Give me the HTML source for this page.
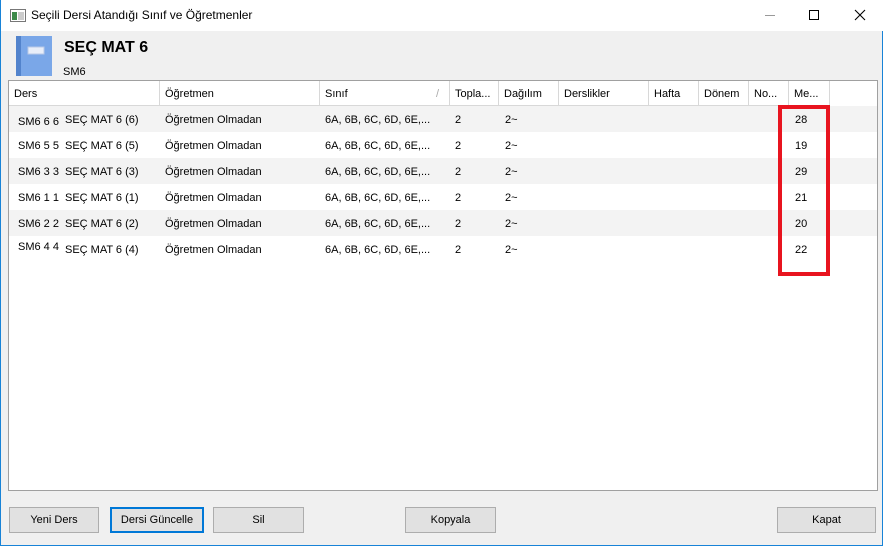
<!DOCTYPE html>
<html><head><meta charset="utf-8"><style>
*{margin:0;padding:0;box-sizing:border-box}
body{width:883px;height:546px;overflow:hidden;background:#f0f0f0;font-family:"Segoe UI","Liberation Sans",sans-serif;font-size:12px;color:#000;position:relative}
.win{position:absolute;left:0;top:0;width:883px;height:546px;border:1px solid #1883d7;border-top:none;background:#f0f0f0}
.title{position:absolute;left:0;top:0;width:883px;height:31px;background:#fff}
.title span{position:absolute;left:30px;top:8px;font-size:12px}
.abs{position:absolute}
.tbl{position:absolute;left:7px;top:80px;width:870px;height:411px;border:1px solid #a0a0a0;background:#fff}
.hd{position:absolute;top:0;height:25px;border-right:1px solid #d8d8d8;border-bottom:1px solid #d8d8d8;background:#fff;padding:7px 0 0 5px;white-space:nowrap;font-size:11px}
.row{position:absolute;left:0;width:868px;height:26px}
.row div{position:absolute;top:8px;font-size:11px;white-space:nowrap}
.btn{position:absolute;top:507px;height:26px;border:1px solid #adadad;background:#e1e1e1;text-align:center;line-height:24px;font-size:11px}
</style></head><body>
<div class="win">
<div class="title">
<svg class="abs" style="left:9px;top:9px" width="16" height="13"><rect x="0.5" y="0.5" width="15" height="12" fill="#fff" stroke="#777"/><rect x="2" y="3" width="5" height="8" fill="#3d8a4a"/><rect x="8" y="3" width="6" height="8" fill="#ccc"/></svg>
<span>Seçili Dersi Atandığı Sınıf ve Öğretmenler</span>
<div class="abs" style="left:764px;top:15px;width:10px;height:1px;background:#999"></div>
<div class="abs" style="left:808px;top:10px;width:10px;height:10px;border:1px solid #000"></div>
<svg class="abs" style="left:853px;top:9px" width="12" height="12"><path d="M1 1L11 11M11 1L1 11" stroke="#000" stroke-width="1.1"/></svg>
</div>
<svg class="abs" style="left:15px;top:36px" width="36" height="40"><rect x="0" y="0" width="36" height="40" fill="#7aa7e8"/><rect x="0" y="0" width="5" height="40" fill="#5283cc"/><rect x="12" y="11" width="16" height="7" fill="#e8eef9" stroke="#b8c8e6"/></svg>
<div class="abs" style="left:63px;top:39px;font-size:16px;font-weight:bold;font-family:'Liberation Sans',sans-serif">SEÇ MAT 6</div>
<div class="abs" style="left:62px;top:66px;font-size:11px">SM6</div>
<div class="tbl">
<div class="hd" style="left:0;width:151px">Ders</div>
<div class="hd" style="left:151px;width:160px">Öğretmen</div>
<div class="hd" style="left:311px;width:130px">Sınıf<span style="position:absolute;right:10px;color:#aaa">/</span></div>
<div class="hd" style="left:441px;width:49px">Topla...</div>
<div class="hd" style="left:490px;width:60px">Dağılım</div>
<div class="hd" style="left:550px;width:90px">Derslikler</div>
<div class="hd" style="left:640px;width:50px">Hafta</div>
<div class="hd" style="left:690px;width:50px">Dönem</div>
<div class="hd" style="left:740px;width:40px">No...</div>
<div class="hd" style="left:780px;width:41px">Me...</div>
<div class="row" style="top:25px;background:#f3f3f3"><div style="left:9px;top:10px">SM6 6 6</div><div style="left:56px">SEÇ MAT 6 (6)</div><div style="left:156px">Öğretmen Olmadan</div><div style="left:316px">6A, 6B, 6C, 6D, 6E,...</div><div style="left:446px">2</div><div style="left:496px">2~</div><div style="left:786px">28</div></div>
<div class="row" style="top:51px"><div style="left:9px">SM6 5 5</div><div style="left:56px">SEÇ MAT 6 (5)</div><div style="left:156px">Öğretmen Olmadan</div><div style="left:316px">6A, 6B, 6C, 6D, 6E,...</div><div style="left:446px">2</div><div style="left:496px">2~</div><div style="left:786px">19</div></div>
<div class="row" style="top:77px;background:#f3f3f3"><div style="left:9px">SM6 3 3</div><div style="left:56px">SEÇ MAT 6 (3)</div><div style="left:156px">Öğretmen Olmadan</div><div style="left:316px">6A, 6B, 6C, 6D, 6E,...</div><div style="left:446px">2</div><div style="left:496px">2~</div><div style="left:786px">29</div></div>
<div class="row" style="top:103px"><div style="left:9px">SM6 1 1</div><div style="left:56px">SEÇ MAT 6 (1)</div><div style="left:156px">Öğretmen Olmadan</div><div style="left:316px">6A, 6B, 6C, 6D, 6E,...</div><div style="left:446px">2</div><div style="left:496px">2~</div><div style="left:786px">21</div></div>
<div class="row" style="top:129px;background:#f3f3f3"><div style="left:9px">SM6 2 2</div><div style="left:56px">SEÇ MAT 6 (2)</div><div style="left:156px">Öğretmen Olmadan</div><div style="left:316px">6A, 6B, 6C, 6D, 6E,...</div><div style="left:446px">2</div><div style="left:496px">2~</div><div style="left:786px">20</div></div>
<div class="row" style="top:155px"><div style="left:9px;top:5px">SM6 4 4</div><div style="left:56px">SEÇ MAT 6 (4)</div><div style="left:156px">Öğretmen Olmadan</div><div style="left:316px">6A, 6B, 6C, 6D, 6E,...</div><div style="left:446px">2</div><div style="left:496px">2~</div><div style="left:786px">22</div></div>
</div>
<div class="abs" style="left:777px;top:105px;width:52px;height:171px;border:4px solid #e8141f"></div>
<div class="btn" style="left:8px;width:90px">Yeni Ders</div>
<div class="btn" style="left:109px;width:94px;border:2px solid #0078d7;line-height:22px">Dersi Güncelle</div>
<div class="btn" style="left:212px;width:91px">Sil</div>
<div class="btn" style="left:404px;width:91px">Kopyala</div>
<div class="btn" style="left:776px;width:99px">Kapat</div>
</div>
</body></html>
